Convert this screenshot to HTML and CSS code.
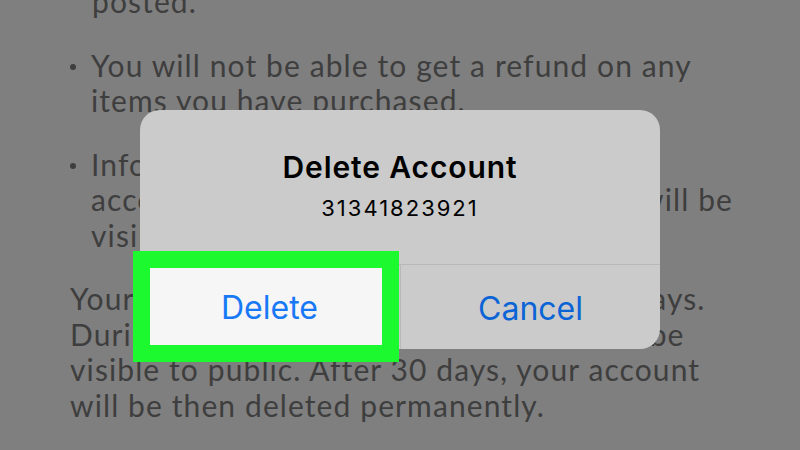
FILE: index.html
```html
<!DOCTYPE html>
<html lang="en">
<head>
<meta charset="utf-8">
<title>Delete Account</title>
<link rel="stylesheet" href="styles.css">
</head>
<body>
<main class="page">
  <p class="cont">posted.</p>
  <ul class="list">
    <li class="item"><span class="dot"></span><span class="txt">You will not be able to get a refund on any<br>items you have purchased.</span></li>
    <li class="item"><span class="dot"></span><span class="txt">Information you shared with other<br>accounts, such as comments and likes, will be<br>visible to them.</span></li>
  </ul>
  <p class="para">Your account will be deactivated for 30 days.<br>During this period, your account will not be<br>visible to public. After 30 days, your account<br>will be then deleted permanently.</p>
</main>

<div class="alert">
  <div class="alert-head">
    <div class="alert-title">Delete Account</div>
    <div class="alert-sub">31341823921</div>
  </div>
  <div class="alert-actions">
    <div class="btn btn-delete">Delete</div>
    <div class="btn btn-cancel">Cancel</div>
  </div>
</div>
</body>
</html>
```

FILE: styles.css
```css
html, body {
  margin: 0;
  padding: 0;
}
body {
  width: 800px;
  height: 450px;
  overflow: hidden;
  background: #7f7f7f;
  position: relative;
}
.page {
  padding-left: 70px;
  margin-top: -16px;
  font-family: "Lato", "Open Sans", sans-serif;
  font-size: 30px;
  letter-spacing: 1.1px;
  line-height: 35.5px;
  color: #3e3e3e;
  white-space: nowrap;
}
.cont {
  margin: 0;
  padding-left: 22px;
}
.list {
  list-style: none;
  margin: 28px 0 0 0;
  padding: 0;
  display: flex;
  flex-direction: column;
  gap: 28px;
}
.item {
  display: flex;
  align-items: flex-start;
}
.dot {
  flex: none;
  width: 6px;
  height: 6px;
  border-radius: 50%;
  background: #3e3e3e;
  margin: 16px 15px 0 0;
}
.para {
  margin: 28px 0 0 0;
}

.alert {
  position: absolute;
  left: 140px;
  top: 110px;
  width: 520px;
  height: 239px;
  background: #cbcbcb;
  border-radius: 20px;
  display: flex;
  flex-direction: column;
  font-family: "Inter", "Roboto", sans-serif;
}
.alert-head {
  box-sizing: border-box;
  height: 155px;
  border-bottom: 1px solid #b8b8b8;
  padding-top: 40px;
  text-align: center;
  color: #000;
}
.alert-title {
  font-size: 30px;
  line-height: 34px;
  font-weight: 600;
  letter-spacing: 0.9px;
}
.alert-sub {
  margin-top: 10px;
  font-size: 22px;
  line-height: 28px;
  letter-spacing: 2px;
}
.alert-actions {
  flex: 1;
  display: grid;
  grid-template-columns: 260px 260px;
}
.btn {
  display: flex;
  align-items: center;
  justify-content: center;
  font-size: 32px;
  line-height: 40px;
  padding-top: 3px;
}
.btn-delete {
  margin: -14px 1px -13px -7px;
  border: 17px solid #1cf92e;
  background: #f6f6f6;
  padding-left: 7px;
  color: #1779f6;
  position: relative;
  z-index: 1;
}
.btn-cancel {
  border-left: 1px solid #b8b8b8;
  color: #0a64d6;
}
```
